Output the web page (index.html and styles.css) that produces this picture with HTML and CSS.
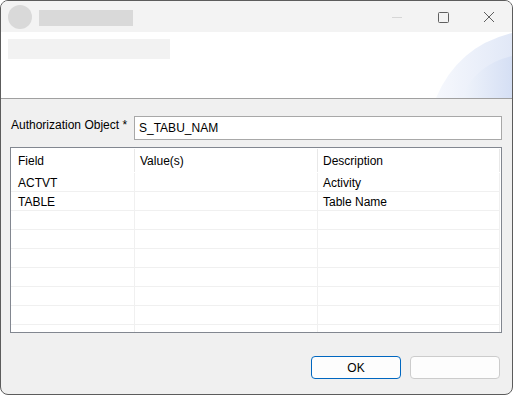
FILE: index.html
```html
<!DOCTYPE html>
<html>
<head>
<meta charset="utf-8">
<link rel="stylesheet" href="styles.css">
</head>
<body>
<div class="window">
  <div class="titlebar">
    <div class="app-icon"></div>
    <div class="title-ph"></div>
    <div class="controls">
      <svg class="ctl" width="46" height="31" viewBox="0 0 46 31"><line x1="18" y1="16.5" x2="28" y2="16.5" stroke="#d6d6d6" stroke-width="1"/></svg>
      <svg class="ctl" width="46" height="31" viewBox="0 0 46 31"><rect x="18.5" y="11.5" width="10" height="10" rx="1" fill="none" stroke="#5f5f5f" stroke-width="1"/></svg>
      <svg class="ctl" width="46" height="31" viewBox="0 0 46 31"><path d="M18 11 L28 21 M28 11 L18 21" stroke="#5f5f5f" stroke-width="1"/></svg>
    </div>
  </div>
  <div class="banner">
    <div class="banner-ph"></div>
    <svg class="swoosh" width="76" height="66" viewBox="0 0 76 66">
      <defs>
        <linearGradient id="g1" x1="0" y1="0" x2="1" y2="0">
          <stop offset="0" stop-color="#f6f8fd"/>
          <stop offset="1" stop-color="#e1e8f7"/>
        </linearGradient>
        <linearGradient id="g2" x1="0" y1="0" x2="1" y2="0">
          <stop offset="0" stop-color="#f0f4fb"/>
          <stop offset="1" stop-color="#d5dff4"/>
        </linearGradient>
      </defs>
      <path d="M0 66 Q22 14 76 1 L76 66 Z" fill="url(#g1)"/>
      <path d="M25 66 Q40 32 76 24 L76 66 Z" fill="url(#g2)"/>
    </svg>
  </div>
  <div class="content">
    <div class="obj-row">
      <label class="obj-label">Authorization Object *</label>
      <div class="obj-input">S_TABU_NAM</div>
    </div>
    <div class="list">
      <div class="grid">
        <div class="hcell c1">Field</div>
        <div class="hcell c2">Value(s)</div>
        <div class="hcell c3">Description</div>

        <div class="cell c1">ACTVT</div>
        <div class="cell c2"></div>
        <div class="cell c3">Activity</div>

        <div class="cell c1">TABLE</div>
        <div class="cell c2"></div>
        <div class="cell c3">Table Name</div>

        <div class="cell c1"></div><div class="cell c2"></div><div class="cell c3"></div>
        <div class="cell c1"></div><div class="cell c2"></div><div class="cell c3"></div>
        <div class="cell c1"></div><div class="cell c2"></div><div class="cell c3"></div>
        <div class="cell c1"></div><div class="cell c2"></div><div class="cell c3"></div>
        <div class="cell c1"></div><div class="cell c2"></div><div class="cell c3"></div>
        <div class="cell c1"></div><div class="cell c2"></div><div class="cell c3"></div>
        <div class="cell c1"></div><div class="cell c2"></div><div class="cell c3"></div>
      </div>
    </div>
    <div class="buttons">
      <button class="btn primary">OK</button>
      <button class="btn"></button>
    </div>
  </div>
</div>
</body>
</html>
```
FILE: styles.css
```css
html, body {
  margin: 0;
  padding: 0;
  background: #ffffff;
}
body {
  font-family: "Liberation Sans", Arial, sans-serif;
  font-size: 12px;
  color: #000;
}
.window {
  width: 513px;
  height: 395px;
  box-sizing: border-box;
  border: 1px solid #5c5c5c;
  border-radius: 8px;
  overflow: hidden;
  display: flex;
  flex-direction: column;
  background: #f0f0f0;
}
.titlebar {
  height: 31px;
  background: #f3f3f3;
  display: flex;
  align-items: center;
  flex-shrink: 0;
}
.app-icon {
  width: 24px;
  height: 24px;
  border-radius: 50%;
  background: #d9d9d9;
  margin-left: 7px;
}
.title-ph {
  width: 94px;
  height: 16px;
  background: #d9d9d9;
  margin-left: 7px;
  margin-top: 3px;
}
.controls {
  margin-left: auto;
  display: flex;
  height: 31px;
}
.ctl {
  display: block;
}
.banner {
  height: 66px;
  background: #ffffff;
  border-bottom: 1px solid #a0a0a0;
  position: relative;
  flex-shrink: 0;
  overflow: hidden;
}
.banner-ph {
  width: 162px;
  height: 20px;
  background: #f2f2f2;
  margin: 7px 0 0 7px;
}
.swoosh {
  position: absolute;
  right: 0;
  bottom: 0;
  display: block;
}
.content {
  flex: 1;
  display: flex;
  flex-direction: column;
  padding: 17px 10px 0 9px;
}
.obj-row {
  display: flex;
  align-items: flex-start;
  gap: 5px;
}
.obj-label {
  padding-top: 2px;
  line-height: 14px;
  white-space: nowrap;
  width: 118px;
  padding-left: 1px;
}
.obj-input {
  flex: 1;
  border: 1px solid #a8a8a8;
  background: #fff;
  padding-left: 4px;
  padding-top: 1px;
  height: 21px;
  line-height: 21px;
}
.list {
  margin-top: 7px;
  height: 184px;
  border: 1px solid #828790;
  background: #fff;
  overflow: hidden;
}
.grid {
  display: grid;
  grid-template-columns: 124px 183px 182px;
}
.hcell {
  height: 22px;
  line-height: 22px;
  padding-top: 2px;
  padding-bottom: 1px;
  position: relative;
  white-space: nowrap;
}
.hcell::after {
  content: "";
  position: absolute;
  right: 0;
  top: 1px;
  height: 23px;
  width: 1px;
  background: #e8e8e8;
}
.cell {
  height: 16px;
  line-height: 16px;
  padding-top: 2px;
  border-right: 1px solid #f0f0f0;
  border-bottom: 1px solid #f0f0f0;
  white-space: nowrap;
}
.c1 { padding-left: 7px; }
.c2 { padding-left: 5px; }
.c3 { padding-left: 5px; }
.buttons {
  display: flex;
  justify-content: flex-end;
  gap: 9px;
  margin-top: 23px;
  padding-right: 2px;
}
.btn {
  width: 90px;
  height: 23px;
  box-sizing: border-box;
  border: 1px solid #cccccc;
  border-radius: 4px;
  background: #fdfdfd;
  font-family: "Liberation Sans", Arial, sans-serif;
  font-size: 12px;
  color: #000;
  padding: 0;
  margin: 0;
}
.btn.primary {
  border-color: #0067c0;
}
```
